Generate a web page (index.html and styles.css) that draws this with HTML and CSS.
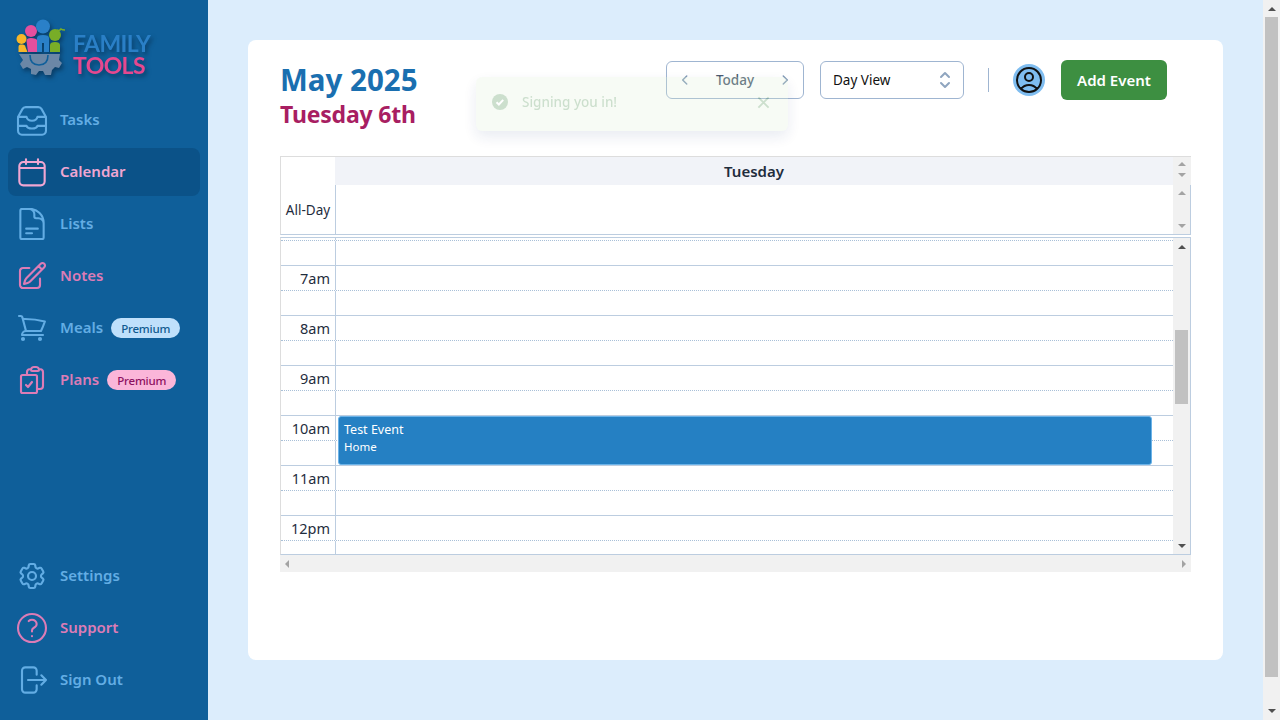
FILE: index.html
```html
<!DOCTYPE html>
<html lang="en">
<head>
    <meta charset="UTF-8">
    <meta name="viewport" content="width=device-width, initial-scale=1.0">
    <title>Family Tools - Calendar</title>
    <link rel="stylesheet" href="styles.css">
</head>
<body>
    <div class="app">
        <aside class="sidebar">
            <div class="logo">
                <svg class="logo-mark" viewBox="0 0 52 58" width="52" height="58">
                    <path fill="#6b87a6" d="M3 35h41l-1 6 3 3-3 5-4-1-3 3-1 5h-6l-2-4h-4l-3 4-5-1v-5l-4-2-4 2-3-5 3-4z"/>
                    <path fill="none" stroke="#0f5f9a" stroke-width="1.6" d="M14 36c0 7 4 10 9 10s9-3 9-10"/>
                    <circle cx="5.500" cy="20" r="5" fill="#f7b62a"/>
                    <path fill="#f7b62a" d="M2.500 28c0-2 1-2.500 3-2.500s4 .5 4 2.500l2 5H2.500z"/>
                    <circle cx="15" cy="12" r="6" fill="#e44f9e"/>
                    <path fill="#e44f9e" d="M10.500 22c0-2 1.500-3 4.500-3s6 1 7 3l.5 11H12z"/>
                    <circle cx="27" cy="7.500" r="7" fill="#2a80c8"/>
                    <path fill="#2a80c8" d="M21 19c0-2 2-3 6-3s6 1 6 3v14h-5v-9h-2v9h-5z"/>
                    <circle cx="39" cy="16" r="6" fill="#78ad27"/>
                    <path fill="#78ad27" d="M34 26c0-2 2-3 5-3s5 1 5 3v7H34z"/>
                    <path fill="none" stroke="#78ad27" stroke-width="1.500" d="M41 11c2 1 3 .5 4-1 1 1 2 1 4 1"/>
                </svg>
                <div class="logo-text">
                    <span class="logo-family">FAMILY</span>
                    <span class="logo-tools">TOOLS</span>
                </div>
            </div>

            <nav class="nav">
                <a class="nav-item blue">
                    <svg class="nav-icon nav-icon-big" viewBox="1.700 1.700 20.600 20.600"><path d="M3 10l2.800-5a2.500 2.500 0 0 1 2.200-1.300h8A2.500 2.500 0 0 1 18.200 5L21 10M3 10h5.500c.3 1.500 1.500 2.500 3.500 2.500s3.200-1 3.500-2.500H21M3 10v9a2.500 2.500 0 0 0 2.500 2.500h13A2.500 2.500 0 0 0 21 19v-9M3 15.800h5.500c.3 1 1.500 1.700 3.500 1.700s3.200-.7 3.500-1.700H21"/></svg>
                    <span>Tasks</span>
                </a>
                <a class="nav-item pink active">
                    <svg class="nav-icon" viewBox="0 0 24 24"><path d="M5.500 4.500h13a3 3 0 0 1 3 3V19a3 3 0 0 1-3 3h-13a3 3 0 0 1-3-3V7.500a3 3 0 0 1 3-3zM2.500 9h19M7.500 2.500V6M16.500 2.500V6"/></svg>
                    <span>Calendar</span>
                </a>
                <a class="nav-item blue">
                    <svg class="nav-icon nav-icon-big" viewBox="1.700 1.700 20.600 20.600"><path d="M19.500 14.250v-2.625a3.375 3.375 0 00-3.375-3.375h-1.500A1.125 1.125 0 0113.500 7.125v-1.500a3.375 3.375 0 00-3.375-3.375H8.250m0 12.750h7.500m-7.500 3H12M10.500 2.250H5.625c-.621 0-1.125.504-1.125 1.125v17.250c0 .621.504 1.125 1.125 1.125h12.750c.621 0 1.125-.504 1.125-1.125V11.250a9 9 0 00-9-9z"/></svg>
                    <span>Lists</span>
                </a>
                <a class="nav-item pink">
                    <svg class="nav-icon" viewBox="0 0 24 24"><path d="M16.862 4.487l1.687-1.688a1.875 1.875 0 112.652 2.652L10.582 16.070a4.500 4.500 0 01-1.897 1.130L6 18l.8-2.685a4.500 4.500 0 011.130-1.897l8.932-8.931zm0 0L19.500 7.125M18 14v4.750A2.250 2.250 0 0115.750 21H5.250A2.250 2.250 0 013 18.750V8.250A2.250 2.250 0 015.250 6H10"/></svg>
                    <span>Notes</span>
                </a>
                <a class="nav-item blue">
                    <svg class="nav-icon" viewBox="0 0 24 24"><path d="M2.250 3h1.386c.51 0 .955.343 1.087.835l.383 1.437M7.500 14.250a3 3 0 00-3 3h15.750m-12.750-3h11.218c1.121-2.300 2.100-4.684 2.924-7.138a60.114 60.114 0 00-16.536-1.840M7.500 14.250L5.106 5.272M6 20.250a.75.75 0 11-1.500 0 .75.75 0 011.500 0zm12.750 0a.75.75 0 11-1.500 0 .75.75 0 011.500 0z"/></svg>
                    <span>Meals</span>
                    <span class="badge badge-blue">Premium</span>
                </a>
                <a class="nav-item pink">
                    <svg class="nav-icon" viewBox="0 0 24 24"><path d="M11.350 3.836c-.065.21-.1.433-.1.664 0 .414.336.75.75.75h4.500a.75.75 0 00.75-.75 2.250 2.250 0 00-.1-.664m-5.800 0A2.251 2.251 0 0113.500 2.250H15c1.012 0 1.867.668 2.150 1.586m-5.800 0c-.376.023-.75.05-1.124.08C9.095 4.010 8.250 4.973 8.250 6.108V8.250m8.900-4.414c.376.023.75.05 1.124.08 1.131.094 1.976 1.057 1.976 2.192V16.500A2.250 2.250 0 0118 18.750h-2.250m-7.500-10.500H4.875c-.621 0-1.125.504-1.125 1.125v11.250c0 .621.504 1.125 1.125 1.125h9.750c.621 0 1.125-.504 1.125-1.125V18.750m-7.500-10.500h6.375c.621 0 1.125.504 1.125 1.125v9.375m-8.250-3l1.500 1.500 3-3.750"/></svg>
                    <span>Plans</span>
                    <span class="badge badge-pink">Premium</span>
                </a>
            </nav>

            <nav class="nav nav-bottom">
                <a class="nav-item blue">
                    <svg class="nav-icon" viewBox="0 0 24 24"><path d="M9.594 3.940c.09-.542.56-.94 1.110-.94h2.593c.55 0 1.020.398 1.110.94l.213 1.281c.063.374.313.686.645.870.074.04.147.083.22.127.324.196.72.257 1.075.124l1.217-.456a1.125 1.125 0 011.370.49l1.296 2.247a1.125 1.125 0 01-.26 1.431l-1.003.827c-.293.24-.438.613-.431.992a6.759 6.759 0 010 .255c-.007.378.138.75.43.99l1.005.828c.424.35.534.954.26 1.430l-1.298 2.247a1.125 1.125 0 01-1.369.491l-1.217-.456c-.355-.133-.75-.072-1.076.124a6.570 6.570 0 01-.22.128c-.331.183-.581.495-.644.869l-.213 1.280c-.09.543-.56.941-1.110.941h-2.594c-.55 0-1.020-.398-1.110-.94l-.213-1.281c-.062-.374-.312-.686-.644-.870a6.520 6.520 0 01-.22-.127c-.325-.196-.72-.257-1.076-.124l-1.217.456a1.125 1.125 0 01-1.369-.49l-1.297-2.247a1.125 1.125 0 01.26-1.431l1.004-.827c.292-.24.437-.613.43-.992a6.932 6.932 0 010-.255c.007-.378-.138-.75-.43-.99l-1.004-.828a1.125 1.125 0 01-.26-1.430l1.297-2.247a1.125 1.125 0 011.370-.491l1.216.456c.356.133.751.072 1.076-.124.072-.044.146-.087.22-.128.332-.183.582-.495.644-.869l.214-1.281zM15 12a3 3 0 11-6 0 3 3 0 016 0z"/></svg>
                    <span>Settings</span>
                </a>
                <a class="nav-item pink">
                    <svg class="nav-icon nav-icon-big" viewBox="1.700 1.700 20.600 20.600"><path d="M9.879 7.519c1.171-1.025 3.071-1.025 4.242 0 1.172 1.025 1.172 2.687 0 3.712-.203.179-.43.326-.67.442-.745.361-1.450.999-1.450 1.827v.75M21 12a9 9 0 11-18 0 9 9 0 0118 0zm-9 5.250h.008v.008H12v-.008z"/></svg>
                    <span>Support</span>
                </a>
                <a class="nav-item blue">
                    <svg class="nav-icon" viewBox="0 0 24 24"><path d="M15.500 8V5A2.500 2.500 0 0 0 13 2.500H7A2.500 2.500 0 0 0 4.500 5v14A2.500 2.500 0 0 0 7 21.500h6a2.500 2.500 0 0 0 2.500-2.500v-3M9 12h13.500M19 8.500l3.500 3.500-3.500 3.500"/></svg>
                    <span>Sign Out</span>
                </a>
            </nav>
        </aside>

        <main class="main">
            <div class="card">
                <header class="cal-header">
                    <div class="cal-title">
                        <h1>May 2025</h1>
                        <h2>Tuesday 6th</h2>
                    </div>
                    <div class="cal-actions">
                        <div class="today-group">
                            <svg class="chev" viewBox="0 0 24 24"><path d="M15 5l-7 7 7 7"/></svg>
                            <span>Today</span>
                            <svg class="chev" viewBox="0 0 24 24"><path d="M9 5l7 7-7 7"/></svg>
                        </div>
                        <div class="view-select">
                            <span>Day View</span>
                            <svg class="updown" viewBox="0 0 12 20"><path d="M2 7l4-4 4 4M2 13l4 4 4-4"/></svg>
                        </div>
                        <div class="sep"></div>
                        <div class="avatar">
                            <svg viewBox="0 0 24 24"><path d="M17.982 18.725A7.488 7.488 0 0012 15.750a7.488 7.488 0 00-5.982 2.975m11.964 0a9 9 0 10-11.963 0m11.963 0A8.966 8.966 0 0112 21a8.966 8.966 0 01-5.982-2.275M15 9.750a3 3 0 11-6 0 3 3 0 016 0z"/></svg>
                        </div>
                        <button class="add-btn">Add Event</button>
                    </div>
                </header>

                <div class="toast">
                    <svg class="toast-check" viewBox="0 0 16 16"><circle cx="8" cy="8" r="8"/><path d="M4.500 8.200l2.400 2.300 4.300-4.600"/></svg>
                    <span class="toast-msg">Signing you in!</span>
                    <svg class="toast-close" viewBox="0 0 14 14"><path d="M1.500 1.500l11 11M12.500 1.500l-11 11"/></svg>
                </div>

                <section class="calendar">
                    <div class="day-head">
                        <div class="gutter-blank"></div>
                        <div class="day-name">Tuesday</div>
                        <div class="sb sb-head">
                            <i class="arrow up light"></i>
                            <i class="arrow down light"></i>
                        </div>
                    </div>
                    <div class="allday">
                        <div class="allday-label">All-Day</div>
                        <div class="allday-cell"></div>
                        <div class="sb sb-allday">
                            <i class="arrow up light"></i>
                            <i class="arrow down light"></i>
                        </div>
                    </div>
                    <div class="time-wrap">
                        <div class="time-grid">
                            <div class="slot slot-top dotted"><div class="slot-time"></div></div>
                            <div class="slot solid"><div class="slot-time"></div></div>
                            <div class="slot dotted"><div class="slot-time">7am</div></div>
                            <div class="slot solid"><div class="slot-time"></div></div>
                            <div class="slot dotted"><div class="slot-time">8am</div></div>
                            <div class="slot solid"><div class="slot-time"></div></div>
                            <div class="slot dotted"><div class="slot-time">9am</div></div>
                            <div class="slot solid"><div class="slot-time"></div></div>
                            <div class="slot dotted"><div class="slot-time">10am</div></div>
                            <div class="slot solid"><div class="slot-time"></div></div>
                            <div class="slot dotted"><div class="slot-time">11am</div></div>
                            <div class="slot solid"><div class="slot-time"></div></div>
                            <div class="slot dotted"><div class="slot-time">12pm</div></div>
                            <div class="slot slot-end"><div class="slot-time"></div></div>
                            <div class="event">
                                <div class="event-title">Test Event</div>
                                <div class="event-sub">Home</div>
                            </div>
                        </div>
                        <div class="sb sb-time">
                            <i class="arrow up"></i>
                            <div class="sb-thumb"></div>
                            <i class="arrow down"></i>
                        </div>
                    </div>
                    <div class="hbar">
                        <i class="arrow left"></i>
                        <i class="arrow right"></i>
                    </div>
                </section>
            </div>
        </main>

        <div class="page-bar">
            <i class="arrow up"></i>
            <div class="page-thumb"></div>
            <i class="arrow down"></i>
        </div>
    </div>
</body>
</html>
```
FILE: styles.css
```css
* {
    box-sizing: border-box;
}

body {
    margin: 0;
    padding: 0;
    font-family: "Noto Sans", "Open Sans", Arial, sans-serif;
    overflow: hidden;
}

.app {
    display: flex;
    height: 720px;
}

/* sidebar */
.sidebar {
    width: 208px;
    flex-shrink: 0;
    display: flex;
    flex-direction: column;
    padding: 20px 8px 16px;
    background-color: #0f5f9a;
}

.logo {
    display: flex;
    align-items: center;
    gap: 5px;
    height: 56px;
    margin: 0 0 20px 8px;
    filter: drop-shadow(2px 3px 2px rgba(5, 40, 70, 0.6));
}

.logo-text {
    display: flex;
    flex-direction: column;
    margin-top: 12px;
}

.logo-family,
.logo-tools {
    font-family: "Lato", sans-serif;
    font-size: 23px;
    font-weight: 700;
    line-height: 22px;
    letter-spacing: -0.6px;
}

.logo-family {
    color: #2a7fc6;
}

.logo-tools {
    color: #e5488f;
}

.nav {
    display: flex;
    flex-direction: column;
    gap: 4px;
}

.nav-bottom {
    margin-top: auto;
}

.nav-item {
    display: flex;
    align-items: center;
    height: 48px;
    padding-left: 8px;
    border-radius: 8px;
    font-size: 15px;
    font-weight: 600;
}

.nav-item span {
    margin-bottom: 2px;
}

.nav-item.blue {
    color: #63ade4;
}

.nav-item.pink {
    color: #dc7cb6;
}

.nav-item.active {
    background-color: #0b5288;
    color: #f0a6d2;
}

.nav-icon {
    width: 32px;
    height: 32px;
    margin-right: 12px;
    fill: none;
    stroke: currentColor;
    stroke-width: 1.6;
    stroke-linecap: round;
    stroke-linejoin: round;
}

.nav-icon-big {
    stroke-width: 1.35;
}

.nav-item .badge {
    display: flex;
    align-items: center;
    justify-content: center;
    width: 69px;
    height: 20px;
    margin: 0 0 0 8px;
    border-radius: 10px;
    font-size: 11.500px;
    font-weight: 500;
    letter-spacing: -0.2px;
}

.badge-blue {
    background-color: #bfe0fb;
    color: #0f5a90;
}

.badge-pink {
    background-color: #fbb6d9;
    color: #8d1060;
}

/* main area */
.main {
    flex: 1;
    padding: 40px;
    background-color: #dcedfc;
}

.card {
    position: relative;
    height: 620px;
    padding: 20px 32px;
    border-radius: 8px;
    background-color: white;
}

.cal-header {
    display: flex;
    justify-content: space-between;
    height: 96px;
    padding-right: 24px;
}

.cal-title h1 {
    margin: 0;
    font-size: 29.500px;
    line-height: 40px;
    font-weight: 700;
    color: #1a6fb0;
}

.cal-title h2 {
    margin: 0;
    font-size: 23px;
    line-height: 28px;
    font-weight: 700;
    letter-spacing: -0.2px;
    color: #a81e62;
}

.cal-actions {
    display: flex;
    align-items: center;
    height: 40px;
}

.today-group {
    display: flex;
    align-items: center;
    justify-content: space-between;
    width: 138px;
    height: 38px;
    padding: 0 11px;
    border: 1px solid #9fb5d1;
    border-radius: 6px;
    font-size: 13.500px;
    font-weight: 500;
    color: #4a5a6e;
}

.chev {
    width: 14px;
    height: 14px;
    fill: none;
    stroke: #8099b5;
    stroke-width: 2.5;
    stroke-linecap: round;
    stroke-linejoin: round;
}

.view-select {
    display: flex;
    align-items: center;
    justify-content: space-between;
    width: 144px;
    height: 38px;
    margin-left: 16px;
    padding: 0 12px 0 12px;
    border: 1px solid #9fb5d1;
    border-radius: 6px;
    font-size: 13.500px;
    color: #111;
}

.updown {
    width: 12px;
    height: 20px;
    fill: none;
    stroke: #8fa5bf;
    stroke-width: 2;
    stroke-linecap: round;
    stroke-linejoin: round;
}

.sep {
    width: 1px;
    height: 24px;
    margin: 0 24px;
    background-color: #9fb5d1;
}

.avatar {
    width: 32px;
    height: 32px;
    border-radius: 50%;
    background-color: #7fbdf0;
}

.avatar svg {
    display: block;
    width: 32px;
    height: 32px;
    fill: none;
    stroke: #111;
    stroke-width: 1.5;
    stroke-linecap: round;
    stroke-linejoin: round;
}

.add-btn {
    width: 106px;
    height: 40px;
    margin-left: 16px;
    border: none;
    border-radius: 6px;
    background-color: #3d8f41;
    color: white;
    font-family: inherit;
    font-size: 15px;
    font-weight: 600;
}

/* toast, still fading in over the header */
.toast {
    position: absolute;
    left: 228px;
    top: 37px;
    display: flex;
    align-items: center;
    width: 312px;
    height: 54px;
    padding: 0 16px 4px;
    border-radius: 6px;
    background-color: #dff0d8;
    box-shadow: 0 6px 14px rgba(30, 60, 120, 0.4);
    opacity: 0.24;
}

.toast-check {
    width: 16px;
    height: 16px;
    margin-right: 14px;
    fill: #2e7d32;
}

.toast-check path {
    fill: none;
    stroke: white;
    stroke-width: 2;
}

.toast-msg {
    flex: 1;
    font-size: 13.500px;
    font-weight: 500;
    color: #2e7d32;
}

.toast-close {
    width: 13px;
    height: 13px;
    margin-right: 2px;
    fill: none;
    stroke: #2e7d32;
    stroke-width: 2;
}

/* calendar */
.calendar {
    width: 911px;
}

.day-head {
    display: flex;
    height: 29px;
    border-top: 1px solid #ddd;
    border-left: 1px solid #ddd;
}

.gutter-blank {
    width: 54px;
}

.day-name {
    flex: 1;
    height: 28px;
    background-color: #f1f3f8;
    text-align: center;
    font-size: 15px;
    font-weight: 600;
    line-height: 28px;
    color: #1f2d3d;
}

.sb {
    display: flex;
    flex-direction: column;
    align-items: center;
    width: 18px;
    background-color: #f1f1f1;
}

.sb-head {
    height: 28px;
    padding-top: 5px;
    gap: 7px;
}

.allday {
    display: flex;
    height: 50px;
    border-left: 1px solid #ddd;
    border-right: 1px solid #bccde0;
    border-bottom: 1px solid #bccde0;
}

.allday-label {
    width: 55px;
    border-right: 1px solid #bccde0;
    font-size: 13.500px;
    line-height: 50px;
    text-align: center;
    color: #1f2d3d;
}

.allday-cell {
    flex: 1;
}

.sb-allday {
    width: 17px;
    justify-content: space-between;
    padding: 6px 0 6px;
}

.time-wrap {
    display: flex;
    height: 318px;
    margin-top: 2px;
    border-top: 1px solid #bccde0;
    border-left: 1px solid #ddd;
    border-right: 1px solid #bccde0;
    border-bottom: 1px solid #bccde0;
}

.time-grid {
    position: relative;
    flex: 1;
    overflow: hidden;
}

.slot {
    height: 25px;
}

.slot.solid {
    border-bottom: 1px solid #bccde0;
}

.slot.dotted {
    border-bottom: 1px dotted #a9c0d8;
}

.slot-top {
    height: 3px;
}

.slot-end {
    height: 13px;
}

.slot-time {
    width: 55px;
    height: 100%;
    padding-right: 5px;
    border-right: 1px solid #bccde0;
    font-size: 14.500px;
    line-height: 24px;
    text-align: right;
    color: #1f2d3d;
}

.event {
    position: absolute;
    left: 57px;
    top: 178px;
    width: 814px;
    height: 49px;
    padding: 4px 5px 3px;
    border: 1px solid #6cb3e8;
    border-radius: 3px;
    background-color: #2580c3;
    color: white;
}

.event-title {
    font-size: 12.500px;
    line-height: 17px;
}

.event-sub {
    font-size: 11.500px;
    line-height: 17px;
}

.sb-time {
    width: 17px;
    padding: 7px 0 6px;
}

.sb-thumb {
    width: 13px;
    height: 74px;
    margin-top: 81px;
    margin-bottom: auto;
    background-color: #c1c1c1;
}

.hbar {
    display: flex;
    align-items: center;
    justify-content: space-between;
    height: 17px;
    padding: 0 5px;
    background-color: #f1f1f1;
}

.arrow {
    display: block;
    width: 0;
    height: 0;
    flex-shrink: 0;
    border: 4px solid transparent;
}

.arrow.up {
    border-top-width: 0;
    border-bottom-color: #505050;
}

.arrow.down {
    border-bottom-width: 0;
    border-top-color: #505050;
}

.arrow.up.light {
    border-bottom-color: #a3a3a3;
}

.arrow.down.light {
    border-top-color: #a3a3a3;
}

.arrow.left {
    border-left-width: 0;
    border-right-color: #a3a3a3;
}

.arrow.right {
    border-right-width: 0;
    border-left-color: #a3a3a3;
}

/* page scrollbar */
.page-bar {
    display: flex;
    flex-direction: column;
    align-items: center;
    width: 17px;
    flex-shrink: 0;
    padding: 7px 0 7px;
    background-color: #f1f1f1;
}

.page-thumb {
    width: 13px;
    height: 660px;
    margin-top: 6px;
    margin-bottom: auto;
    background-color: #c1c1c1;
}
```
